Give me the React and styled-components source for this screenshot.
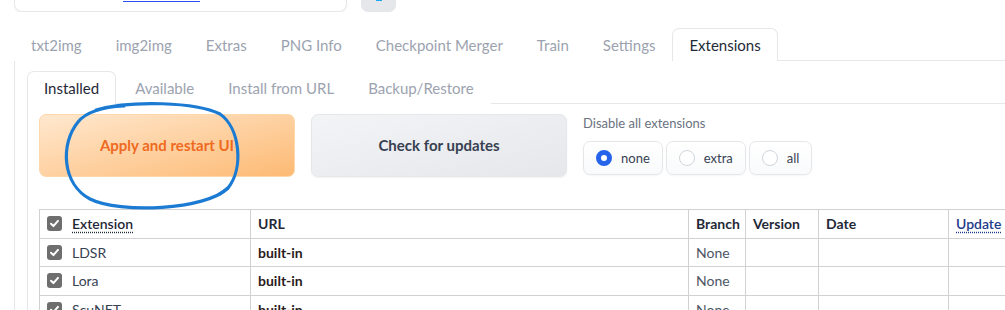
import styled, { createGlobalStyle } from "styled-components";

const GlobalStyle = createGlobalStyle`
  html, body {
    margin: 0;
    background: #fff;
    overflow: hidden;
  }
  body {
    font-family: Lato, "Noto Sans", sans-serif;
    color: #1f2937;
  }
`;

const mainTabs = [
  "txt2img",
  "img2img",
  "Extras",
  "PNG Info",
  "Checkpoint Merger",
  "Train",
  "Settings",
  "Extensions",
];

const subTabs = ["Installed", "Available", "Install from URL", "Backup/Restore"];

const extensions = [
  { name: "LDSR", url: "built-in", branch: "None" },
  { name: "Lora", url: "built-in", branch: "None" },
  { name: "ScuNET", url: "built-in", branch: "None" },
];

function Check() {
  return (
    <CheckBox>
      <svg width="11" height="11" viewBox="0 0 12 12">
        <path
          d="M2.2 6.3 L4.8 8.8 L9.8 3.2"
          fill="none"
          stroke="#fff"
          strokeWidth="2.2"
          strokeLinecap="round"
          strokeLinejoin="round"
        />
      </svg>
    </CheckBox>
  );
}

function App() {
  return (
    <Page>
      <GlobalStyle />

      <TopRow>
        <PromptBox>
          <LinkLine />
        </PromptBox>
        <IconButton>
          <IconBit />
        </IconButton>
      </TopRow>

      <TabNav>
        {mainTabs.map((tab) => (
          <Tab key={tab} $active={tab === "Extensions"}>
            {tab}
          </Tab>
        ))}
      </TabNav>

      <Panel>
        <SubTabNav>
          {subTabs.map((tab) => (
            <SubTab key={tab} $active={tab === "Installed"}>
              {tab}
            </SubTab>
          ))}
        </SubTabNav>

        <SubPanel>
          <Actions>
            <ApplyButton>Apply and restart UI</ApplyButton>
            <CheckButton>Check for updates</CheckButton>
            <DisableGroup>
              <GroupLabel>Disable all extensions</GroupLabel>
              <RadioRow>
                {["none", "extra", "all"].map((opt) => (
                  <RadioOption key={opt}>
                    <RadioDot $checked={opt === "none"} />
                    {opt}
                  </RadioOption>
                ))}
              </RadioRow>
            </DisableGroup>
          </Actions>

          <Table>
            <colgroup>
              <col style={{ width: 211 }} />
              <col style={{ width: 438 }} />
              <col style={{ width: 57 }} />
              <col style={{ width: 73 }} />
              <col style={{ width: 130 }} />
              <col style={{ width: 120 }} />
            </colgroup>
            <thead>
              <tr>
                <Th>
                  <NameCell>
                    <Check />
                    <Abbr>Extension</Abbr>
                  </NameCell>
                </Th>
                <Th>URL</Th>
                <Th>Branch</Th>
                <Th>Version</Th>
                <Th>Date</Th>
                <Th>
                  <Abbr $blue>Update</Abbr>
                </Th>
              </tr>
            </thead>
            <tbody>
              {extensions.map((ext) => (
                <tr key={ext.name}>
                  <Td>
                    <NameCell>
                      <Check />
                      <ExtName>{ext.name}</ExtName>
                    </NameCell>
                  </Td>
                  <Td>
                    <UrlText>{ext.url}</UrlText>
                  </Td>
                  <Td $muted>{ext.branch}</Td>
                  <Td />
                  <Td />
                  <Td />
                </tr>
              ))}
            </tbody>
          </Table>

          <Annotation width="220" height="120" viewBox="0 0 220 120">
            <path
              d="M 40 8 C 75 -2, 140 0, 164 12 C 184 26, 188 66, 172 86 C 150 108, 64 112, 34 97 C 6 82, 4 42, 22 20 C 30 10, 47 5, 68 4"
              fill="none"
              stroke="#1b7bd3"
              strokeWidth="3.2"
              strokeLinecap="round"
            />
            <path
              d="M 172 86 L 164 92"
              fill="none"
              stroke="#1b7bd3"
              strokeWidth="3"
              strokeLinecap="round"
            />
          </Annotation>
        </SubPanel>
      </Panel>
    </Page>
  );
}

const Page = styled.div`
  padding-left: 14px;
  height: 310px;
  overflow: hidden;
`;

const TopRow = styled.div`
  display: flex;
  align-items: flex-end;
  gap: 14px;
  height: 12px;
  overflow: hidden;
`;

const PromptBox = styled.div`
  width: 333px;
  height: 40px;
  flex: none;
  border: 1px solid #e5e7eb;
  border-radius: 8px;
  box-shadow: 0 1px 2px rgba(0, 0, 0, 0.05);
  background: #fff;
  display: flex;
  align-items: flex-start;
  padding-left: 108px;
  padding-top: 28px;
  box-sizing: border-box;
`;

const LinkLine = styled.div`
  width: 77px;
  height: 1px;
  background: #2b4cf5;
`;

const IconButton = styled.div`
  width: 35px;
  height: 40px;
  flex: none;
  border-radius: 7px;
  background: #e5e7eb;
  display: flex;
  justify-content: center;
  padding-top: 28px;
  box-sizing: border-box;
`;

const IconBit = styled.div`
  width: 6px;
  height: 1px;
  background: #19a7ef;
`;

const TabNav = styled.div`
  display: flex;
  margin-top: 16px;
  border-bottom: 1px solid #e5e7eb;
`;

const Tab = styled.div`
  padding: 0 16px;
  display: flex;
  align-items: center;
  font-size: 15px;
  color: ${(p) => (p.$active ? "#1f2937" : "#9ca3af")};
  border: 1px solid ${(p) => (p.$active ? "#e5e7eb" : "transparent")};
  border-bottom: none;
  border-radius: 7px 7px 0 0;
  background: #fff;
  margin-bottom: -1px;
  box-sizing: border-box;
  height: 33px;
`;

const Panel = styled.div`
  border-left: 1px solid #e5e7eb;
  padding: 10px 0 0 12px;
`;

const SubTabNav = styled.div`
  display: flex;
  border-bottom: 1px solid #e5e7eb;
`;

const SubTab = styled(Tab)`
  margin-right: ${(p) => (p.$active ? "2px" : "0")};
`;

const SubPanel = styled.div`
  position: relative;
  border-left: 1px solid #e5e7eb;
  padding: 10px 0 0 11px;
`;

const Actions = styled.div`
  display: flex;
  gap: 16px;
  align-items: flex-start;
`;

const BigButton = styled.button`
  width: 256px;
  height: 63px;
  flex: none;
  border-radius: 7px;
  padding-bottom: 3px;
  font-family: Lato, "Noto Sans", sans-serif;
  font-size: 15px;
  font-weight: 700;
  cursor: pointer;
`;

const ApplyButton = styled(BigButton)`
  color: #ee6a1f;
  border: 1px solid #fed7aa;
  background: linear-gradient(to bottom right, #ffe8cf, #fdba74);
`;

const CheckButton = styled(BigButton)`
  color: #374151;
  border: 1px solid #e5e7eb;
  background: linear-gradient(to bottom right, #f3f4f6, #e5e7eb);
  box-shadow: 0 1px 2px rgba(0, 0, 0, 0.06);
`;

const DisableGroup = styled.div`
  display: flex;
  flex-direction: column;
  gap: 10px;
  padding-top: 1px;
`;

const GroupLabel = styled.div`
  font-size: 13px;
  color: #6b7280;
`;

const RadioRow = styled.div`
  display: flex;
  gap: 3px;
`;

const RadioOption = styled.label`
  display: flex;
  align-items: center;
  gap: 9px;
  height: 34px;
  padding: 0 12px;
  box-sizing: border-box;
  border: 1px solid #e5e7eb;
  border-radius: 7px;
  background: linear-gradient(to bottom, #fff, #f9fafb);
  box-shadow: 0 1px 2px rgba(0, 0, 0, 0.04);
  font-size: 13px;
  color: #374151;
`;

const RadioDot = styled.span`
  width: 16px;
  height: 16px;
  border-radius: 50%;
  box-sizing: border-box;
  border: ${(p) => (p.$checked ? "5px solid #2563eb" : "1px solid #d1d5db")};
  background: #fff;
`;

const Table = styled.table`
  margin-top: 32px;
  border-collapse: collapse;
  table-layout: fixed;
  width: 1029px;
  font-size: 14px;
`;

const cell = `
  border: 1px solid #d2d2d2;
  height: 27.5px;
  padding: 0 7px;
  text-align: left;
  white-space: nowrap;
  overflow: hidden;
`;

const Th = styled.th`
  ${cell}
  font-weight: 700;
  color: #1f2937;
`;

const Td = styled.td`
  ${cell}
  color: ${(p) => (p.$muted ? "#4b5563" : "#374151")};
`;

const NameCell = styled.div`
  display: flex;
  align-items: center;
  gap: 10px;
`;

const CheckBox = styled.span`
  width: 15px;
  height: 15px;
  border-radius: 3px;
  background: #6e6e6e;
  display: flex;
  align-items: center;
  justify-content: center;
  flex: none;
`;

const Abbr = styled.span`
  text-decoration: underline dotted;
  text-underline-offset: 3px;
  font-weight: 600;
  color: ${(p) => (p.$blue ? "#1e3a8a" : "#1f2937")};
`;

const ExtName = styled.span`
  color: #374151;
`;

const UrlText = styled.span`
  font-weight: 700;
  color: #2a1b1b;
`;

const Annotation = styled.svg`
  position: absolute;
  left: 28px;
  top: -2px;
  pointer-events: none;
  overflow: visible;
`;

export default App;
